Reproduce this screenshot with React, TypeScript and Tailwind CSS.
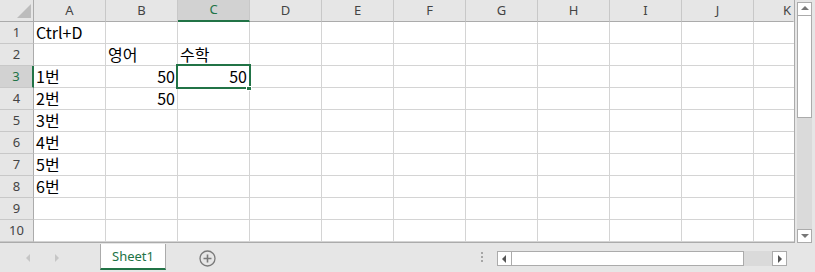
import React from "react";

const COLS = ["A", "B", "C", "D", "E", "F", "G", "H", "I", "J", "K"];

type Cell = { text: string; num?: boolean };
const DATA: Record<number, Record<string, Cell>> = {
  1: { A: { text: "Ctrl+D" } },
  2: { B: { text: "영어" }, C: { text: "수학" } },
  3: { A: { text: "1번" }, B: { text: "50", num: true }, C: { text: "50", num: true } },
  4: { A: { text: "2번" }, B: { text: "50", num: true } },
  5: { A: { text: "3번" } },
  6: { A: { text: "4번" } },
  7: { A: { text: "5번" } },
  8: { A: { text: "6번" } },
};

const cellFont = { fontFamily: '"Noto Sans CJK KR", "Noto Sans", sans-serif' };
const headFont = { fontFamily: '"Noto Sans", "Open Sans", sans-serif' };

function ColHeader({ name }: { name: string }) {
  const selected = name === "C";
  const wide = name === "K";
  return (
    <div
      style={headFont}
      className={`flex h-[22px] shrink-0 items-center justify-center border-r text-[13px] ${
        wide ? "w-[40px] border-r-transparent justify-end pr-[2px]" : "w-[72px] border-r-[#c8c8c8]"
      } ${
        selected
          ? "border-b-2 border-b-[#217346] bg-[#d2d2d2] text-[#217346]"
          : "border-b border-b-[#ababab] text-[#444]"
      }`}
    >
      {name}
    </div>
  );
}

function Row({ n }: { n: number }) {
  const selected = n === 3;
  const row = DATA[n] ?? {};
  return (
    <div className="flex h-[22px]">
      <div
        style={headFont}
        className={`flex w-[34px] shrink-0 items-center justify-center border-b border-b-[#c8c8c8] text-[13px] ${
          selected
            ? "border-r-2 border-r-[#217346] bg-[#d2d2d2] text-[#217346]"
            : "border-r border-r-[#ababab] bg-[#e6e6e6] text-[#444]"
        }`}
      >
        {n}
      </div>
      {COLS.map((c) => {
        const cell = row[c];
        const active = n === 3 && c === "C";
        return (
          <div
            key={c}
            style={cellFont}
            className={`flex shrink-0 items-end border-b border-b-[#d4d4d4] bg-white pb-[1px] text-[16px] leading-[20px] text-black ${
              c === "K" ? "w-[40px]" : "w-[72px] border-r border-r-[#d4d4d4]"
            } ${cell?.num ? "justify-end pr-[2px]" : "pl-[2px]"} ${active ? "relative z-10" : ""}`}
          >
            {cell?.text}
            {active ? (
              <>
                <div className="pointer-events-none absolute -left-[2px] -top-[2px] z-10 h-[25px] w-[75px] border-2 border-[#217346]" />
                <div className="absolute left-[68px] top-[20px] z-20 h-[5px] w-[6px] border border-white bg-[#217346]" />
              </>
            ) : null}
          </div>
        );
      })}
    </div>
  );
}

function Arrow({ dir, color }: { dir: "left" | "right" | "up" | "down"; color: string }) {
  const pts = {
    left: "6,1 6,9 2,5",
    right: "3,1 3,9 7,5",
    up: "1,6 9,6 5,2",
    down: "1,3 9,3 5,7",
  }[dir];
  return (
    <svg width="10" height="10" viewBox="0 0 10 10">
      <polygon points={pts} fill={color} />
    </svg>
  );
}

export default function App() {
  return (
    <div className="flex h-[272px] w-[815px] flex-col overflow-hidden bg-[#e6e6e6]">
      <div className="flex h-[243px]">
        <div className="flex w-[794px] flex-col overflow-hidden border-b border-b-[#ababab]">
          <div className="flex bg-[#e6e6e6]">
            <div className="flex h-[22px] w-[34px] shrink-0 items-end justify-end border-b border-r border-b-[#ababab] border-r-[#ababab] pb-[3px] pr-[2px]">
              <svg width="16" height="14" viewBox="0 0 16 14">
                <polygon points="16,0 16,14 2,14" fill="#bcbcbc" />
              </svg>
            </div>
            {COLS.map((c) => (
              <ColHeader key={c} name={c} />
            ))}
          </div>
          {Array.from({ length: 10 }, (_, i) => (
            <Row key={i} n={i + 1} />
          ))}
        </div>
        <div className="w-[3px] border-l border-l-[#ababab]" />
        <div className="mt-[2px] flex w-[15px] flex-col bg-[#dadada]">
          <div className="flex h-[14px] items-center justify-center border border-[#ababab] bg-white">
            <Arrow dir="up" color="#777" />
          </div>
          <div className="h-[102px] border-x border-b border-[#ababab] bg-white" />
          <div className="flex-1" />
          <div className="flex h-[14px] items-center justify-center border border-[#ababab] bg-white">
            <Arrow dir="down" color="#777" />
          </div>
        </div>
      </div>
      <div className="flex h-[29px] items-start">
        <div className="flex w-[100px] items-center pl-[24px] pt-[10px]">
          <Arrow dir="left" color="#c6c6c6" />
          <div className="w-[18px]" />
          <Arrow dir="right" color="#c6c6c6" />
        </div>
        <div
          style={headFont}
          className="mt-[1px] flex h-[26px] w-[66px] items-center justify-center border-x border-x-[#ababab] border-b-2 border-b-[#217346] bg-white pt-[1px] text-[13px] text-[#217346]"
        >
          Sheet1
        </div>
        <div className="ml-[33px] mt-[7px]">
          <svg width="17" height="17" viewBox="0 0 17 17">
            <circle cx="8.5" cy="8.5" r="7.5" fill="none" stroke="#7a7a7a" strokeWidth="1.3" />
            <path d="M8.5 4.5v8M4.5 8.5h8" stroke="#7a7a7a" strokeWidth="1.6" />
          </svg>
        </div>
        <div className="ml-[265px] mt-[9px] flex flex-col gap-[2px]">
          <div className="h-[2px] w-[2px] bg-[#a6a6a6]" />
          <div className="h-[2px] w-[2px] bg-[#a6a6a6]" />
          <div className="h-[2px] w-[2px] bg-[#a6a6a6]" />
        </div>
        <div className="ml-[14px] mt-[8px] flex h-[15px] w-[290px] bg-[#dadada]">
          <div className="flex w-[15px] items-center justify-center border border-[#ababab] bg-white">
            <Arrow dir="left" color="#555" />
          </div>
          <div className="w-[232px] border-y border-r border-[#ababab] bg-white" />
          <div className="flex-1" />
          <div className="flex w-[15px] items-center justify-center border border-[#ababab] bg-white">
            <Arrow dir="right" color="#555" />
          </div>
        </div>
      </div>
    </div>
  );
}
